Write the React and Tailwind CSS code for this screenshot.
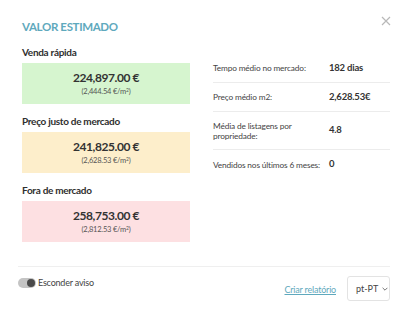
import React from "react";

const estimates = [
  { label: "Venda rápida", price: "224,897.00 €", perM2: "(2,444.54 €/m", bg: "bg-[#d6f5cf]" },
  { label: "Preço justo de mercado", price: "241,825.00 €", perM2: "(2,628.53 €/m", bg: "bg-[#fdeecb]" },
  { label: "Fora de mercado", price: "258,753.00 €", perM2: "(2,812.53 €/m", bg: "bg-[#fde0e2]" },
];

const stats = [
  { label: "Tempo médio no mercado:", value: "182 dias", h: "h-[29px]" },
  { label: "Preço médio m2:", value: "2,628.53€", h: "h-[29px]" },
  { label: "Média de listagens por propriedade:", value: "4.8", h: "h-[38px]" },
  { label: "Vendidos nos últimos 6 meses:", value: "0", h: "h-[29px]" },
];

export default function App() {
  return (
    <div className="w-[404px] h-[311px] bg-white font-['Lato',sans-serif] text-[#333] relative overflow-hidden">
      {/* Close */}
      <button className="absolute right-[13px] top-[16px] text-[#b8b8b8]">
        <svg width="10" height="10" viewBox="0 0 10 10" stroke="currentColor" strokeWidth="1.2">
          <path d="M1 1 L9 9 M9 1 L1 9" />
        </svg>
      </button>

      <div className="pl-[22px] pr-[14px] pt-[19px]">
        <h2 className="text-[11.5px] font-bold text-[#5fa9bd] leading-[15px] tracking-[-0.35px]">VALOR ESTIMADO</h2>

        <div className="flex mt-[12px]">
          {/* Left column */}
          <div className="w-[168px] flex flex-col">
            {estimates.map((e, i) => (
              <div key={i} className={i > 0 ? "mt-[11px]" : ""}>
                <div className="text-[10px] font-bold leading-[12px] tracking-[-0.3px] text-[#2f2f2f]">{e.label}</div>
                <div className={`${e.bg} mt-[5px] h-[41px] flex flex-col items-center justify-center`}>
                  <div className="text-[12px] font-bold leading-[14px] tracking-[-0.45px] text-[#333]">{e.price}</div>
                  <div className="text-[7.5px] leading-[9px] tracking-[-0.2px] text-[#555] mt-[2px]">
                    {e.perM2}
                    <sup className="text-[5px]">2</sup>)
                  </div>
                </div>
              </div>
            ))}
          </div>

          {/* Right column */}
          <div className="ml-[23px] flex-1 mt-[8px]">
            {stats.map((s, i) => (
              <div
                key={i}
                className={`${s.h} flex items-center ${i < stats.length - 1 ? "border-b border-[#ececec]" : ""}`}
              >
                <div className="w-[116px] text-[8.3px] leading-[10px] tracking-[-0.15px] text-[#444] pr-[2px]">{s.label}</div>
                <div className="text-[9.5px] font-bold tracking-[-0.2px] text-[#333]">{s.value}</div>
              </div>
            ))}
          </div>
        </div>
      </div>

      {/* Footer */}
      <div className="absolute left-[18px] right-[14px] top-[266px] border-t border-[#efefef]">
        <div className="flex items-start justify-between pt-[9px]">
          <label className="flex items-center gap-[2px] mt-[1px]">
            <span className="w-[18px] h-[10px] rounded-full bg-[#c4c4c4] flex items-center justify-end pr-[1px]">
              <span className="w-[8px] h-[8px] rounded-full bg-[#4a4a4a]" />
            </span>
            <span className="text-[9px] tracking-[-0.2px] text-[#444] leading-[12px]">Esconder aviso</span>
          </label>
          <div className="flex items-center gap-[11px]">
            <a className="text-[9px] tracking-[-0.2px] text-[#5fa9bd] underline mt-[2px] whitespace-nowrap">Criar relatório</a>
            <div className="w-[43px] h-[25px] border border-[#e3e3e3] rounded-[3px] flex items-center pl-[8px] gap-[4px]">
              <span className="text-[9px] text-[#444] whitespace-nowrap">pt-PT</span>
              <svg width="6" height="4" viewBox="0 0 6 4" fill="none" stroke="#666" strokeWidth="0.9">
                <path d="M0.6 0.8 L3 3.2 L5.4 0.8" />
              </svg>
            </div>
          </div>
        </div>
      </div>
    </div>
  );
}
